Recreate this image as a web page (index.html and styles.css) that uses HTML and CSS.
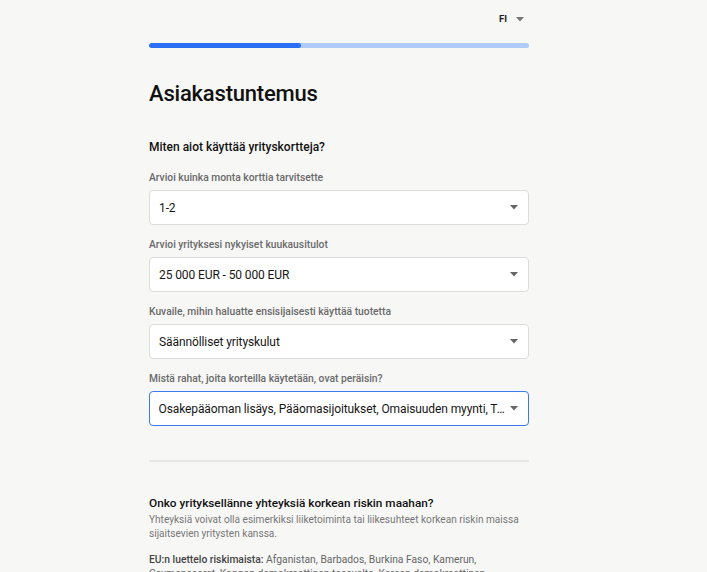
FILE: index.html
```html
<!DOCTYPE html>
<html lang="fi">
<head>
<meta charset="utf-8">
<title>Asiakastuntemus</title>
<link rel="stylesheet" href="styles.css">
</head>
<body>
<div class="page">
  <header class="topbar">
    <div class="lang">FI <svg class="lang-caret" width="8" height="5" viewBox="0 0 8 5"><path d="M0 0h8L4 4.5z" fill="#777"/></svg></div>
  </header>
  <div class="progress"><div class="progress-fill" style="width:40%"></div></div>
  <h1 class="title">Asiakastuntemus</h1>

  <h2 class="section-title">Miten aiot käyttää yrityskortteja?</h2>

  <div class="field">
    <div class="label">Arvioi kuinka monta korttia tarvitsette</div>
    <div class="select"><span class="value">1-2</span><svg class="caret" width="8" height="5" viewBox="0 0 8 5"><path d="M0 0h8L4 4.5z" fill="#666"/></svg></div>
  </div>
  <div class="field">
    <div class="label">Arvioi yrityksesi nykyiset kuukausitulot</div>
    <div class="select"><span class="value">25 000 EUR - 50 000 EUR</span><svg class="caret" width="8" height="5" viewBox="0 0 8 5"><path d="M0 0h8L4 4.5z" fill="#666"/></svg></div>
  </div>
  <div class="field">
    <div class="label">Kuvaile, mihin haluatte ensisijaisesti käyttää tuotetta</div>
    <div class="select"><span class="value">Säännölliset yrityskulut</span><svg class="caret" width="8" height="5" viewBox="0 0 8 5"><path d="M0 0h8L4 4.5z" fill="#666"/></svg></div>
  </div>
  <div class="field">
    <div class="label">Mistä rahat, joita korteilla käytetään, ovat peräisin?</div>
    <div class="select focused"><span class="value">Osakepääoman lisäys, Pääomasijoitukset, Omaisuuden myynti, Tulorahoitus</span><svg class="caret" width="8" height="5" viewBox="0 0 8 5"><path d="M0 0h8L4 4.5z" fill="#666"/></svg></div>
  </div>

  <hr class="divider">

  <h2 class="section-title risk">Onko yrityksellänne yhteyksiä korkean riskin maahan?</h2>
  <p class="desc">Yhteyksiä voivat olla esimerkiksi liiketoiminta tai liikesuhteet korkean riskin maissa sijaitsevien yritysten kanssa.</p>
  <p class="list"><strong>EU:n luettelo riskimaista:</strong> Afganistan, Barbados, Burkina Faso, Kamerun, Caymansaaret, Kongon demokraattinen tasavalta, Korean demokraattinen kansantasavalta</p>
</div>
</body>
</html>
```

FILE: styles.css
```css
html, body {
  margin: 0;
  padding: 0;
  background: #f7f7f6;
}
body {
  font-family: Roboto, "Liberation Sans", sans-serif;
  color: #111;
  height: 572px;
  overflow: hidden;
}
.page {
  width: 380px;
  margin-left: 149px;
}
.topbar {
  display: flex;
  justify-content: flex-end;
  padding: 12px 5px 0 0;
  height: 43px;
  box-sizing: border-box;
}
.lang {
  display: flex;
  align-items: center;
  gap: 9px;
  font-size: 9.5px;
  font-weight: 700;
  line-height: 14px;
  height: 14px;
  color: #222;
}
.progress {
  height: 5px;
  border-radius: 3px;
  background: #aecbfa;
  overflow: hidden;
}
.progress-fill {
  height: 100%;
  background: #2a6ff4;
  border-radius: 3px;
}
.title {
  margin: 31px 0 0;
  font-size: 22px;
  font-weight: 500;
  line-height: 30px;
  letter-spacing: -0.2px;
}
.section-title {
  margin: 29px 0 15px;
  font-size: 12px;
  font-weight: 500;
  line-height: 18px;
}
.field {
  margin-bottom: 13px;
}
.label {
  font-size: 10.3px;
  font-weight: 500;
  line-height: 14px;
  color: #6a6a6a;
  margin-bottom: 5px;
}
.select {
  display: flex;
  align-items: center;
  height: 35px;
  box-sizing: border-box;
  background: #fff;
  border: 1px solid #dcdcdc;
  border-radius: 4px;
  padding: 0 10px 0 9px;
}
.select.focused {
  border: 1.5px solid #3a7af2;
  padding-left: 8.5px;
}
.value {
  flex: 1;
  min-width: 0;
  font-size: 12px;
  letter-spacing: -0.1px;
  color: #161616;
  white-space: nowrap;
  overflow: hidden;
  text-overflow: ellipsis;
  padding-right: 4px;
}
.caret {
  flex: none;
}
.divider {
  border: 0;
  height: 2px;
  background: #e7e7e5;
  margin: 34px 0 0;
}
.section-title.risk {
  margin: 32px 0 1px;
  font-size: 11.8px;
}
.desc {
  margin: 0;
  font-size: 10.1px;
  line-height: 14px;
  color: #777;
}
.list {
  margin: 12px 0 0;
  font-size: 10.3px;
  line-height: 14px;
  color: #666;
}
.list strong {
  color: #444;
  font-weight: 500;
}
```
